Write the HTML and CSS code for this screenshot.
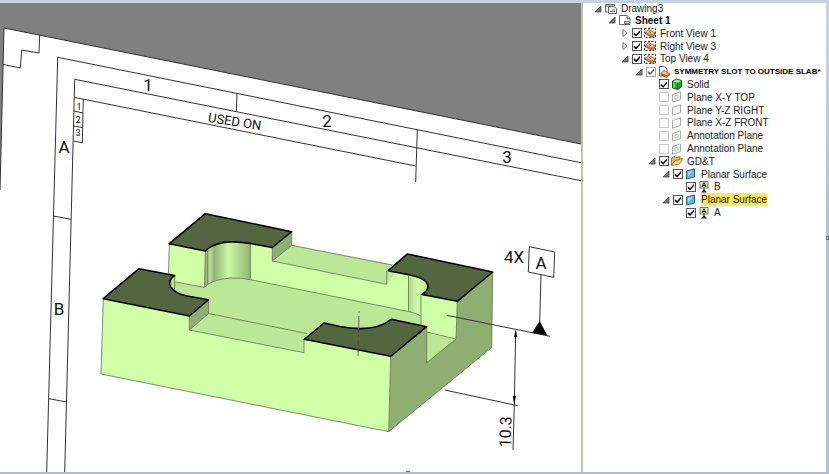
FILE: index.html
```html
<!DOCTYPE html>
<html lang="en">
<head>
<meta charset="utf-8">
<title>Drawing3</title>
<link rel="stylesheet" href="styles.css">
</head>
<body>
<svg class="defs" aria-hidden="true">
  <symbol id="open" viewBox="0 0 8 8"><path d="M7 1V7H1Z" fill="#777" stroke="#444" stroke-width=".8"/></symbol>
  <symbol id="closed" viewBox="0 0 8 8"><path d="M2 .5L6 4L2 7.500Z" fill="#fff" stroke="#777"/></symbol>
  <symbol id="drawing" viewBox="0 0 12 12"><path d="M.5 9V1.500H9.500V3M.5 9H3M.5 3H9" fill="#fff" stroke="#666"/><path d="M3.500 3.500H9L11.500 5.500V10.500H3.500Z" fill="#f4f4f4" stroke="#666"/><path d="M5 8.500H10M7 7H10" stroke="#777"/></symbol>
  <symbol id="sheet" viewBox="0 0 12 12"><path d="M.5 1.500H8L11 4.500V10.500H.5Z" fill="#fff" stroke="#666"/><path d="M8 1.500V4.500H11" fill="#ddd" stroke="#666"/><path d="M5 10V7H10.500V10Z" fill="#777"/><path d="M6 8.500H10" stroke="#ddd"/></symbol>
  <symbol id="view" viewBox="0 0 12 12"><path d="M.5 1.500H11.500V10.500H.5Z" fill="#eee" stroke="#333" stroke-dasharray="2 1.500"/><path d="M1.500 5L5 2.500L11 6L10.500 8.500L7.500 10L1.500 7Z" fill="#bd7b45" stroke="#6b4022" stroke-width=".6"/><path d="M2 5L5 3L10.500 6L7.500 7.500Z" fill="#f0c38e"/><path d="M5 4.500L7 5.700" stroke="#875025"/></symbol>
  <symbol id="part" viewBox="0 0 12 12"><path d="M1.500 .5H6L9 3V10H1.500Z" fill="#fff" stroke="#667"/><path d="M3 7L6 4.500L11.500 7.500V9L8.500 11.500L3 9Z" fill="#b97036" stroke="#67391b" stroke-width=".6"/><path d="M3 7L6 5L11 7.500L8.500 9Z" fill="#f1bd80"/></symbol>
  <symbol id="solid" viewBox="0 0 12 12"><path d="M1.500 3.500L5 1L10.500 2.500V8.500L7 11.500L1.500 10Z" fill="#28a828" stroke="#075f0b"/><path d="M2 3.500L5 1.500L10 2.800L7 4.700Z" fill="#a3ee91"/><path d="M2 4.500L4 5V10L2 9.500Z" fill="#70dc68"/><path d="M7 5V11" stroke="#075f0b" stroke-width=".8"/></symbol>
  <symbol id="plane" viewBox="0 0 12 12"><path d="M1.500 3.500L9.500 .8V8.500L1.500 11.200Z" fill="#fff" stroke="#aaa"/></symbol>
  <symbol id="plane-mark" viewBox="0 0 12 12"><path d="M1.500 3.500L9.500 .8V8.500L1.500 11.200Z" fill="#fff" stroke="#aaa"/><path d="M4 8.500V5L7 4V7Z" fill="none" stroke="#a9cfb7"/></symbol>
  <symbol id="folder" viewBox="0 0 12 12"><path d="M.5 10V3L4 1.500L5 2.500L9 1.500V5" fill="#e5ba55" stroke="#80602a" stroke-width=".8"/><path d="M.5 10.500L3.500 6L11.500 3.500L8.500 9Z" fill="#ffd97a" stroke="#8b682a" stroke-width=".8"/></symbol>
  <symbol id="surface" viewBox="0 0 12 12"><path d="M1.500 3L9.500 1V9L1.500 11Z" fill="#65b6ea" stroke="#315c78"/><path d="M3 4L7.500 3L3 8.500Z" fill="#acdcf8"/></symbol>
  <symbol id="datum" viewBox="0 0 12 12"><path d="M2 .5H10V7H2Z" fill="#e7eacb" stroke="#777b5d"/><path d="M4 6L6 1.500L8 6M4.700 4.500H7.300" fill="none" stroke="#222"/><path d="M6 7V9" stroke="#222"/><path d="M3 11.500L6 8L9 11.500Z" fill="#222"/></symbol>
</svg>

<div class="app">
  <main class="viewport">
    <svg class="scene" viewBox="0 3 581 469" preserveAspectRatio="xMinYMin slice" role="img" aria-label="Slotted block with datum A">
      <defs>
        <linearGradient id="bore"><stop offset="0" stop-color="#8fae72"/><stop offset=".12" stop-color="#b5dc91"/><stop offset=".22" stop-color="#94b477"/><stop offset=".52" stop-color="#cbf8a3"/><stop offset=".72" stop-color="#b4df8e"/><stop offset="1" stop-color="#91b474"/></linearGradient>
        <linearGradient id="bore-right"><stop offset="0" stop-color="#b0d68c"/><stop offset=".4" stop-color="#d0ffa8"/><stop offset="1" stop-color="#c0eb9a"/></linearGradient>
      </defs>
      <path class="backdrop" d="M0 3H581V144L4 28L0 190Z"/>
      <g class="frame">
        <path d="M581 144L4 28L0 190"/>
        <path d="M39.700 35L39 53L21.700 50L20.300 68L2.700 64.300"/>
        <path d="M581 162.700L57.700 57.300L46.700 472"/>
        <path d="M581 180.700L74.700 79.300L64.700 472"/>
        <path d="M74 97.300L415.700 166M237 93.300L236.300 111.500M417.300 129.700L415.700 182"/>
        <path d="M83.300 99L82.300 142.700L73.500 141M74 111L83 113M73.700 126L83 127.700"/>
        <path d="M53.300 216L71 219.300M49 398.700L66.700 402"/>
      </g>

      <g class="solid">
        <path class="floor" d="M169 275L205 280L250 270L310 285L425 310L427 333L456 339L427 363L304 340L189 318L170 295Z"/>
        <path class="lit" d="M169.300 244L205.300 251L204.500 287.500L175 282L168.500 276Z"/>
        <path fill="url(#bore)" d="M205.300 251Q216 242 233 241.700Q242 241.500 250.500 243.500V279.700Q240 277.500 230 278Q210 280 204.500 287.500Z"/>
        <path class="lit" d="M250.500 243.500L272.300 247.500V261L386.700 284.300V271H409V311.500L250.500 279.700Z"/>
        <path fill="url(#bore-right)" d="M408.500 274L430 278V290L421 296V315.700L408.500 311.500Z"/>
        <path class="floor" d="M272.300 261L291.700 245.300L400 266L386.700 284.300Z"/>
        <path class="shade" d="M291.700 231.700V245.300L272.300 261V247.500Z"/>
        <path class="lit" d="M421 294L457.300 301.300L456 339L420.500 331.500Z"/>
        <path fill="url(#bore)" d="M174.700 275V291Q166 283 174.700 275Z"/>
        <path class="floor" d="M189.300 330L208.700 313.500L307 333.500L304 353Z"/>
        <path class="shade" d="M208.500 299.700V313.500L189.300 330V316Z"/>
        <path class="lit" d="M103.300 298.700L189.500 316L189.300 330L304 352.700V339.300L390.700 356.300L388.700 431.700L101 374Z"/>
        <path class="shade" d="M390.700 356.300L426.700 326.700V362.700L456 339L457.300 301.300L492.700 272L491.700 347.500L388.700 431.700Z"/>
      </g>
      <g class="edge">
        <path d="M169.300 244L168.500 273M175.300 282L204.500 287.500Q210 280 230 278Q240 277.500 250.500 279.700L408.500 311.500Q416 313 420.500 315.700M205.300 251L204.500 287.500M207.700 250V284.500M250.500 243.500V279.700"/>
        <path d="M272.300 247.500V261L386.700 284.300V271M272.300 261L291.700 245.300V231.700M291.700 245.300L392 265M408.500 276V311.500M421 294V325M426.700 332L456 339L457.300 301.300"/>
        <path d="M174.700 275V290M208.500 299.700V313.500L307 333.500M208.700 313.500L189.300 330V316M189.300 330L304 352.700V339.300"/>
        <path d="M103.300 298.700L101 374L388.700 431.700L491.700 347.500L492.700 272M390.700 356.300L388.700 431.700M426.700 326.700V362.700L456 339"/>
      </g>
      <g class="cap">
        <path d="M205.300 213.700L291.700 231.700L272.300 247.500L250.500 243.500Q218 238 205.300 251L169.300 243.700Z"/>
        <path d="M139 268.700L174.700 275.500C165 281 168 294 193 297L208.500 299.700L189.500 316L103.300 298.700Z"/>
        <path d="M407.300 254L492.700 272L457.300 301.300L422 294.500C432 288 430 279 410 275L388.300 270.700Z"/>
        <path d="M304.300 339.300L324 323L340 326.500Q374 333 391.300 319.300L426.700 326.700L390.700 356.300Z"/>
      </g>
      <path class="center" d="M359 311L358 358"/>

      <g class="frame">
        <path d="M446.700 315.300L550 336.300M444.700 390L517.700 405.700M515.700 331L514.300 405L513 450"/>
        <path class="paper" d="M529.300 246.700L554.700 252L553.700 277.300L528.300 272Z"/>
        <path d="M541 274.500L539.700 322"/>
      </g>
      <path d="M539.700 321L532 332.700L547.300 335.500ZM515.700 329.500L514 337H517.300ZM514.300 404.500L512.700 396H516Z"/>
      <g class="note">
        <text x="148" y="91">1</text><text x="327" y="127">2</text><text x="507" y="163">3</text>
        <text x="64" y="153">A</text><text x="59" y="315">B</text>
        <text x="514" y="263">4X</text><text x="541" y="269">A</text>
        <text class="used" transform="translate(234 126) rotate(9)">USED ON</text>
        <text class="size" transform="translate(511 432) rotate(-88)">10.3</text>
        <g class="small"><text x="79" y="110">1</text><text x="78" y="123">2</text><text x="78" y="136">3</text></g>
      </g>
    </svg>
  </main>

  <aside class="browser">
    <ul class="tree">
      <li class="row l0"><button aria-label="Collapse Drawing3"><svg><use href="#open"/></svg></button><svg class="icon"><use href="#drawing"/></svg><span>Drawing3</span></li>
      <li class="row l1"><button aria-label="Collapse Sheet 1"><svg><use href="#open"/></svg></button><svg class="icon"><use href="#sheet"/></svg><span class="bold">Sheet 1</span></li>
      <li class="row l2"><button aria-label="Expand Front View 1"><svg><use href="#closed"/></svg></button><input type="checkbox" id="c1" checked><svg class="icon"><use href="#view"/></svg><label for="c1">Front View 1</label></li>
      <li class="row l2"><button aria-label="Expand Right View 3"><svg><use href="#closed"/></svg></button><input type="checkbox" id="c2" checked><svg class="icon"><use href="#view"/></svg><label for="c2">Right View 3</label></li>
      <li class="row l2"><button aria-label="Collapse Top View 4"><svg><use href="#open"/></svg></button><input type="checkbox" id="c3" checked><svg class="icon"><use href="#view"/></svg><label for="c3">Top View 4</label></li>
      <li class="row l3"><button aria-label="Collapse part"><svg><use href="#open"/></svg></button><input class="dim" type="checkbox" id="c4" checked><svg class="icon"><use href="#part"/></svg><label class="bold part-name" for="c4">SYMMETRY SLOT TO OUTSIDE SLAB*</label></li>
      <li class="row l4 leaf"><input type="checkbox" id="c5" checked><svg class="icon"><use href="#solid"/></svg><label for="c5">Solid</label></li>
      <li class="row l4 leaf"><input type="checkbox" id="c6"><svg class="icon"><use href="#plane-mark"/></svg><label for="c6">Plane X-Y TOP</label></li>
      <li class="row l4 leaf"><input type="checkbox" id="c7"><svg class="icon"><use href="#plane"/></svg><label for="c7">Plane Y-Z RIGHT</label></li>
      <li class="row l4 leaf"><input type="checkbox" id="c8"><svg class="icon"><use href="#plane"/></svg><label for="c8">Plane X-Z FRONT</label></li>
      <li class="row l4 leaf"><input type="checkbox" id="c9"><svg class="icon"><use href="#plane-mark"/></svg><label for="c9">Annotation Plane</label></li>
      <li class="row l4 leaf"><input type="checkbox" id="c10"><svg class="icon"><use href="#plane-mark"/></svg><label for="c10">Annotation Plane</label></li>
      <li class="row l4"><button aria-label="Collapse GD&amp;T"><svg><use href="#open"/></svg></button><input type="checkbox" id="c11" checked><svg class="icon"><use href="#folder"/></svg><label for="c11">GD&amp;T</label></li>
      <li class="row l5"><button aria-label="Collapse Planar Surface"><svg><use href="#open"/></svg></button><input type="checkbox" id="c12" checked><svg class="icon"><use href="#surface"/></svg><label for="c12">Planar Surface</label></li>
      <li class="row l6 leaf"><input type="checkbox" id="c13" checked><svg class="icon"><use href="#datum"/></svg><label for="c13">B</label></li>
      <li class="row l5"><button aria-label="Collapse Planar Surface"><svg><use href="#open"/></svg></button><input type="checkbox" id="c14" checked><svg class="icon"><use href="#surface"/></svg><label class="selected" for="c14">Planar Surface</label></li>
      <li class="row l6 leaf"><input type="checkbox" id="c15" checked><svg class="icon"><use href="#datum"/></svg><label for="c15">A</label></li>
    </ul>
  </aside>
  <div class="rail"><i class="grip"></i></div>
  <i class="grip bottom"></i>
</div>
</body>
</html>
```
FILE: styles.css
```css
* { box-sizing: border-box; }
body { margin: 0; background: #c5d1e3; font-family: "Liberation Sans", Arial, sans-serif; font-size: 10px; color: #222; }
.defs { position: absolute; width: 0; height: 0; }
.app { position: relative; display: flex; height: 100vh; border-top: 3px solid #c5d1e3; border-bottom: 2px solid #afbdd0; overflow: hidden; }
.viewport { flex: 1; min-width: 0; background: #fff; }
.scene { display: block; width: 100%; height: 100%; }
.browser { flex: 0 0 245px; overflow: hidden; background: #fff; border-left: 2px solid #c5bfad; }
.rail { flex: 0 0 3px; display: flex; align-items: center; background: linear-gradient(#c8d4e6, #b4c2da 50%, #b4c2da); }
.grip { width: 3px; height: 4px; border: 1px solid #666; background: #fff; }
.bottom { position: absolute; bottom: -2px; left: 49%; width: 4px; height: 3px; border-bottom: 0; }

.backdrop { fill: #808080; }
.frame { fill: none; stroke: #333; stroke-width: 1; }
.paper { fill: #fff; }
.lit { fill: #d0ffa8; }
.floor { fill: #bbe796; }
.shade { fill: #8fae72; }
.edge { fill: none; stroke: #5f754c; stroke-width: 0.8; }
.cap { fill: #526640; stroke: #000; stroke-width: 1.6; stroke-linejoin: round; }
.center { stroke: #47513e; stroke-width: 0.8; stroke-dasharray: 2 3 16 3; }
.note { font-family: Roboto, sans-serif; font-size: 17px; font-weight: 400; text-anchor: middle; fill: #111; }
.used { font-size: 13px; }
.size { font-size: 16px; }
.small { font-size: 9px; }

.tree { display: grid; grid-template-rows: 11px repeat(16, 1fr); height: 216px; margin: 0; padding: 0; list-style: none; }
.row { display: flex; align-items: center; min-height: 0; white-space: nowrap; }
.row button { flex: 0 0 12px; display: flex; justify-content: center; padding: 0; border: 0; background: none; }
.row button svg { width: 8px; height: 8px; }
.icon { flex: 0 0 12px; height: 12px; margin: 0 4px 0 1px; }
.leaf::before { content: ""; flex: 0 0 12px; }
.row label, .row span { line-height: 13px; }
.row .bold { font-weight: bold; color: #000; }
.row .part-name { font-size: 8px; }
.row .selected { background: #ffe65c; }
.row input { appearance: none; flex: 0 0 10px; height: 10px; margin: 0 1px; border: 1px solid #c8c8c8; background: #fff; }
.row input:checked { border-color: #555; }
.row input:checked::before { content: ""; display: block; width: 8px; height: 8px; background: #000; clip-path: polygon(10% 42%, 40% 65%, 88% 12%, 88% 38%, 40% 92%, 10% 68%); }
.row .dim:checked { border-color: #aaa; }
.row .dim:checked::before { background: #666; }

.l0 { padding-left: 9px; }
.l1 { padding-left: 23px; }
.l2 { padding-left: 36px; }
.l3 { padding-left: 50px; }
.l4 { padding-left: 63px; }
.l5 { padding-left: 77px; }
.l6 { padding-left: 90px; }
```
